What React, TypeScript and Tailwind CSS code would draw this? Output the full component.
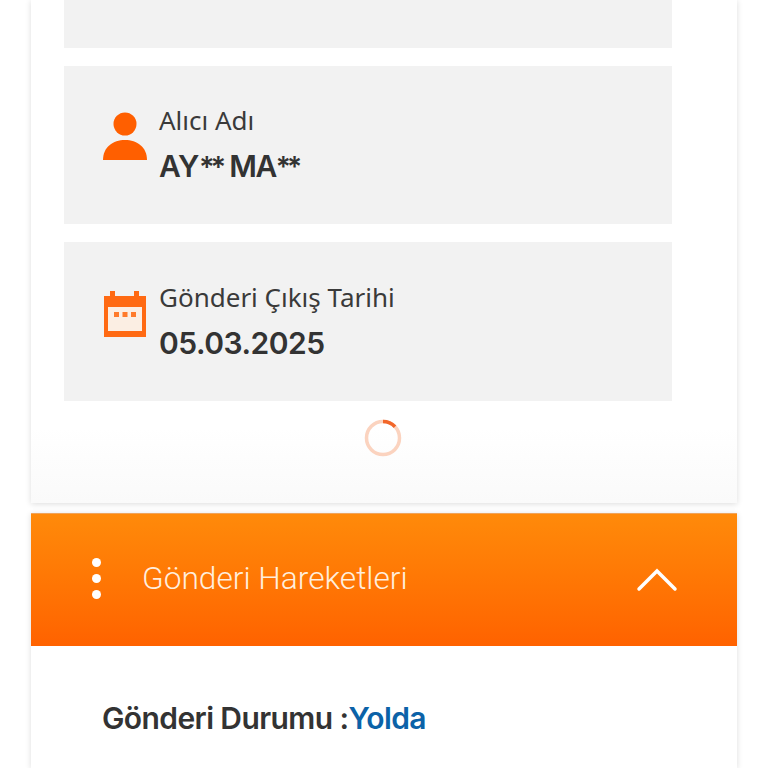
const font = { fontFamily: '"Noto Sans", sans-serif' };
const strong = { fontFamily: 'Inter, sans-serif' };
const thin = { fontFamily: 'Roboto, sans-serif' };

function PersonIcon() {
  return (
    <svg width="46" height="50" viewBox="0 0 46 50" className="mb-[16px] shrink-0">
      <circle cx="23" cy="12" r="11.5" fill="#ff5f00" />
      <path d="M1 48 C1 35 11 28 23 28 C35 28 45 35 45 48 Z" fill="#ff5f00" />
    </svg>
  );
}

function CalendarIcon() {
  return (
    <svg width="42" height="46" viewBox="0 0 42 46" className="mb-[15px] ml-[2px] shrink-0">
      <path d="M0 5 H6 V0 H11 V5 H30 V0 H35 V5 H42 V46 H0 Z" fill="#ff6a13" />
      <rect x="4" y="16" width="34" height="24" fill="#fbeee3" />
      <rect x="10" y="21" width="5" height="5" fill="#ff7a2a" />
      <rect x="18.5" y="21" width="5" height="5" fill="#ff7a2a" />
      <rect x="27" y="21" width="5" height="5" fill="#ff7a2a" />
    </svg>
  );
}

function Stars({ className }: { className: string }) {
  return <span className={className}>**</span>;
}

function InfoBlock({ icon, label, value, h }: { icon: React.ReactNode; label: string; value: React.ReactNode; h: string }) {
  return (
    <div className={`flex items-center bg-[#f2f2f2] pl-[38px] ${h}`}>
      <div className="flex w-[57px] shrink-0 items-center">{icon}</div>
      <div className="flex flex-col text-[#3a3a3a]">
        <span className="text-[26px] leading-[32px]">{label}</span>
        <span style={strong} className="mt-[11px] text-[30px] font-semibold leading-[38px] tracking-[-0.5px] text-[#333333]">{value}</span>
      </div>
    </div>
  );
}

export default function App() {
  return (
    <div style={font} className="flex h-[768px] w-[768px] flex-col overflow-hidden bg-white px-[31px]">
      <section className="flex h-[503px] shrink-0 flex-col bg-gradient-to-b from-white from-[85%] to-[#fafafa] px-[33px] shadow-[0_1px_6px_rgba(0,0,0,0.14)]">
        <div className="mr-[32px] h-[48px] bg-[#f2f2f2]" />
        <div className="mr-[32px] mt-[18px] flex flex-col gap-[18px]">
          <InfoBlock
            h="h-[158px]"
            icon={<PersonIcon />}
            label="Alıcı Adı"
            value={<>AY<Stars className="text-[29px] tracking-[-4px]" /> <span className="tracking-[-1.5px]">MA</span><Stars className="text-[28px] tracking-[-4px]" /></>}
          />
          <InfoBlock h="h-[159px]" icon={<CalendarIcon />} label="Gönderi Çıkış Tarihi" value="05.03.2025" />
        </div>
        <div className="mr-[2px] mt-[18px] flex justify-center">
          <svg width="38" height="38" viewBox="0 0 38 38">
            <circle cx="19" cy="19" r="16.5" fill="none" stroke="#fbd3bf" strokeWidth="3.5" />
            <path d="M19 2.5 A16.5 16.5 0 0 1 31 7.7" fill="none" stroke="#f2662a" strokeWidth="3.5" />
          </svg>
        </div>
      </section>
      <section className="mt-[10px] flex flex-1 flex-col bg-white shadow-[0_1px_6px_rgba(0,0,0,0.14)]">
        <div className="flex h-[133px] shrink-0 items-center border-t border-[#f0a35a] bg-gradient-to-b from-[#ff8a0a] to-[#ff6200] pl-[61px] pr-[59px]">
          <div className="flex w-[50px] flex-col gap-[7px] pb-[3px]">
            <span className="h-[9px] w-[9px] rounded-full bg-white" />
            <span className="h-[9px] w-[9px] rounded-full bg-white" />
            <span className="h-[9px] w-[9px] rounded-full bg-white" />
          </div>
          <span style={thin} className="mb-[2px] flex-1 text-[31.7px] font-light leading-[40px] text-[#ffeedd]">Gönderi Hareketleri</span>
          <svg width="42" height="26" viewBox="0 0 42 26" className="mb-[3px]">
            <path d="M3 23 L21 5 L39 23" fill="none" stroke="#fff" strokeWidth="3.5" strokeLinecap="round" />
          </svg>
        </div>
        <div style={strong} className="pl-[71px] pt-[53px] text-[30px] font-semibold leading-[38px] tracking-[-0.6px] text-[#333333]">
          Gönderi Durumu :<span className="text-[#0b62a8]">Yolda</span>
        </div>
      </section>
    </div>
  );
}
